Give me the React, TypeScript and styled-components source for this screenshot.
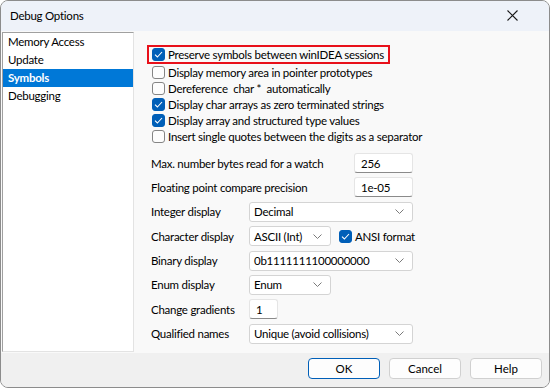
import styled, { createGlobalStyle } from "styled-components";

const GlobalStyle = createGlobalStyle`
  html, body {
    margin: 0;
    background: #ffffff;
  }
  body {
    font-family: Lato, "Noto Sans", sans-serif;
    font-size: 11.5px;
    letter-spacing: -0.25px;
    color: #000;
  }
  * {
    box-sizing: border-box;
  }
`;

const Window = styled.div`
  width: 550px;
  height: 388px;
  display: flex;
  flex-direction: column;
  border: 1px solid #8c8c8c;
  border-radius: 8px;
  overflow: hidden;
  background: #f0f0f0;
`;

const TitleBar = styled.div`
  height: 30px;
  flex: none;
  display: flex;
  align-items: center;
  justify-content: space-between;
  padding: 0 31px 1px 9px;
  background: #eef2f9;
`;

const Body = styled.div`
  flex: 1;
  display: flex;
  background: #f9f9f9;
`;

const SideList = styled.ul`
  width: 132px;
  margin: 1px 0 1px 1px;
  padding: 0;
  list-style: none;
  background: #fff;
  border: 1px solid;
  border-color: #a0a0a0 #e3e3e3 #e3e3e3 #a0a0a0;
`;

const SideItem = styled.li<{ $active?: boolean }>`
  height: 18px;
  line-height: 18px;
  padding-left: 5px;
  background: ${(p) => (p.$active ? "#0078d7" : "transparent")};
  color: ${(p) => (p.$active ? "#fff" : "#000")};
  font-weight: ${(p) => (p.$active ? 700 : 400)};
`;

const Panel = styled.div`
  flex: 1;
  padding: 14px 0 0 13px;
  display: flex;
  flex-direction: column;
`;

const Highlight = styled.div`
  width: 243px;
  height: 19px;
  border: 2px solid #e8101a;
  padding-left: 3px;
  display: flex;
  align-items: center;
`;

const CheckList = styled.div`
  display: flex;
  flex-direction: column;
  padding-left: 5px;
`;

const CheckRow = styled.label`
  height: 16px;
  display: flex;
  align-items: center;
  gap: 3px;
  white-space: pre;
`;

const Box = styled.span<{ $checked?: boolean }>`
  width: 13px;
  height: 13px;
  flex: none;
  border-radius: 3px;
  display: inline-flex;
  align-items: center;
  justify-content: center;
  background: ${(p) => (p.$checked ? "#005fb8" : "#fdfdfd")};
  border: 1px solid ${(p) => (p.$checked ? "#005fb8" : "#858585")};
`;

const Form = styled.div`
  margin: 9px 0 0 4px;
  display: flex;
  flex-direction: column;
  gap: 4.4px;
`;

const FieldRow = styled.div`
  height: 20px;
  display: flex;
  align-items: center;
`;

const Label = styled.span<{ $w: number }>`
  width: ${(p) => p.$w}px;
  flex: none;
  white-space: nowrap;
`;

const TextBox = styled.div<{ $w: number }>`
  width: ${(p) => p.$w}px;
  height: 20px;
  padding-left: 6px;
  display: flex;
  align-items: center;
  background: #fff;
  border: 1px solid #e5e5e5;
  border-bottom-color: #8a8a8a;
  border-radius: 3px;
`;

const Select = styled.div<{ $w: number }>`
  width: ${(p) => p.$w}px;
  height: 20px;
  padding: 0 8px 0 4px;
  display: flex;
  align-items: center;
  justify-content: space-between;
  background: #fff;
  border: 1px solid #d4d4d4;
  border-radius: 3px;
`;

const Inline = styled.div`
  display: flex;
  align-items: center;
  gap: 3px;
  margin-left: 8px;
`;

const Footer = styled.div`
  height: 34px;
  flex: none;
  display: flex;
  align-items: center;
  justify-content: flex-end;
  gap: 9px;
  padding: 0 7px 3px 0;
  background: #f0f0f0;
`;

const Button = styled.button<{ $primary?: boolean }>`
  width: 72px;
  height: 21px;
  font: inherit;
  color: #000;
  background: #fdfdfd;
  border: 1px solid ${(p) => (p.$primary ? "#005fb8" : "#d0d0d0")};
  border-radius: 4px;
  padding: 0;
`;

const Check = () => (
  <svg width="9" height="7" viewBox="0 0 9 7">
    <path d="M1 3.6 L3.4 6 L8 1" fill="none" stroke="#fff" strokeWidth="1.1" />
  </svg>
);

const Chevron = () => (
  <svg width="9" height="5" viewBox="0 0 9 5">
    <path d="M0.5 0.5 L4.5 4.5 L8.5 0.5" fill="none" stroke="#7a7a7a" strokeWidth="1" />
  </svg>
);

const CloseIcon = () => (
  <svg width="11" height="11" viewBox="0 0 11 11">
    <path d="M0.5 0.5 L10.5 10.5 M10.5 0.5 L0.5 10.5" stroke="#1a1a1a" strokeWidth="1.1" />
  </svg>
);

const CheckItem = ({ checked, text }: { checked?: boolean; text: string }) => (
  <CheckRow>
    <Box $checked={checked}>{checked && <Check />}</Box>
    {text}
  </CheckRow>
);

const options = [
  { checked: false, text: "Display memory area in pointer prototypes" },
  { checked: false, text: "Dereference  char *  automatically" },
  { checked: true, text: "Display char arrays as zero terminated strings" },
  { checked: true, text: "Display array and structured type values" },
  { checked: false, text: "Insert single quotes between the digits as a separator" },
];

const pages = ["Memory Access", "Update", "Symbols", "Debugging"];

export default function App() {
  return (
    <>
      <GlobalStyle />
      <Window>
        <TitleBar>
          <span>Debug Options</span>
          <CloseIcon />
        </TitleBar>
        <Body>
          <SideList>
            {pages.map((p) => (
              <SideItem key={p} $active={p === "Symbols"}>
                {p}
              </SideItem>
            ))}
          </SideList>
          <Panel>
            <Highlight>
              <CheckItem checked text="Preserve symbols between winIDEA sessions" />
            </Highlight>
            <CheckList>
              {options.map((o) => (
                <CheckItem key={o.text} checked={o.checked} text={o.text} />
              ))}
            </CheckList>
            <Form>
              <FieldRow>
                <Label $w={203}>Max. number bytes read for a watch</Label>
                <TextBox $w={59}>256</TextBox>
              </FieldRow>
              <FieldRow>
                <Label $w={203}>Floating point compare precision</Label>
                <TextBox $w={59}>1e-05</TextBox>
              </FieldRow>
              <FieldRow>
                <Label $w={98}>Integer display</Label>
                <Select $w={164}>
                  Decimal
                  <Chevron />
                </Select>
              </FieldRow>
              <FieldRow>
                <Label $w={98}>Character display</Label>
                <Select $w={82}>
                  ASCII (Int)
                  <Chevron />
                </Select>
                <Inline>
                  <Box $checked>
                    <Check />
                  </Box>
                  ANSI format
                </Inline>
              </FieldRow>
              <FieldRow>
                <Label $w={98}>Binary display</Label>
                <Select $w={164}>
                  0b1111111100000000
                  <Chevron />
                </Select>
              </FieldRow>
              <FieldRow>
                <Label $w={98}>Enum display</Label>
                <Select $w={82}>
                  Enum
                  <Chevron />
                </Select>
              </FieldRow>
              <FieldRow>
                <Label $w={98}>Change gradients</Label>
                <TextBox $w={29}>1</TextBox>
              </FieldRow>
              <FieldRow>
                <Label $w={98}>Qualified names</Label>
                <Select $w={164}>
                  Unique (avoid collisions)
                  <Chevron />
                </Select>
              </FieldRow>
            </Form>
          </Panel>
        </Body>
        <Footer>
          <Button $primary>OK</Button>
          <Button>Cancel</Button>
          <Button>Help</Button>
        </Footer>
      </Window>
    </>
  );
}
